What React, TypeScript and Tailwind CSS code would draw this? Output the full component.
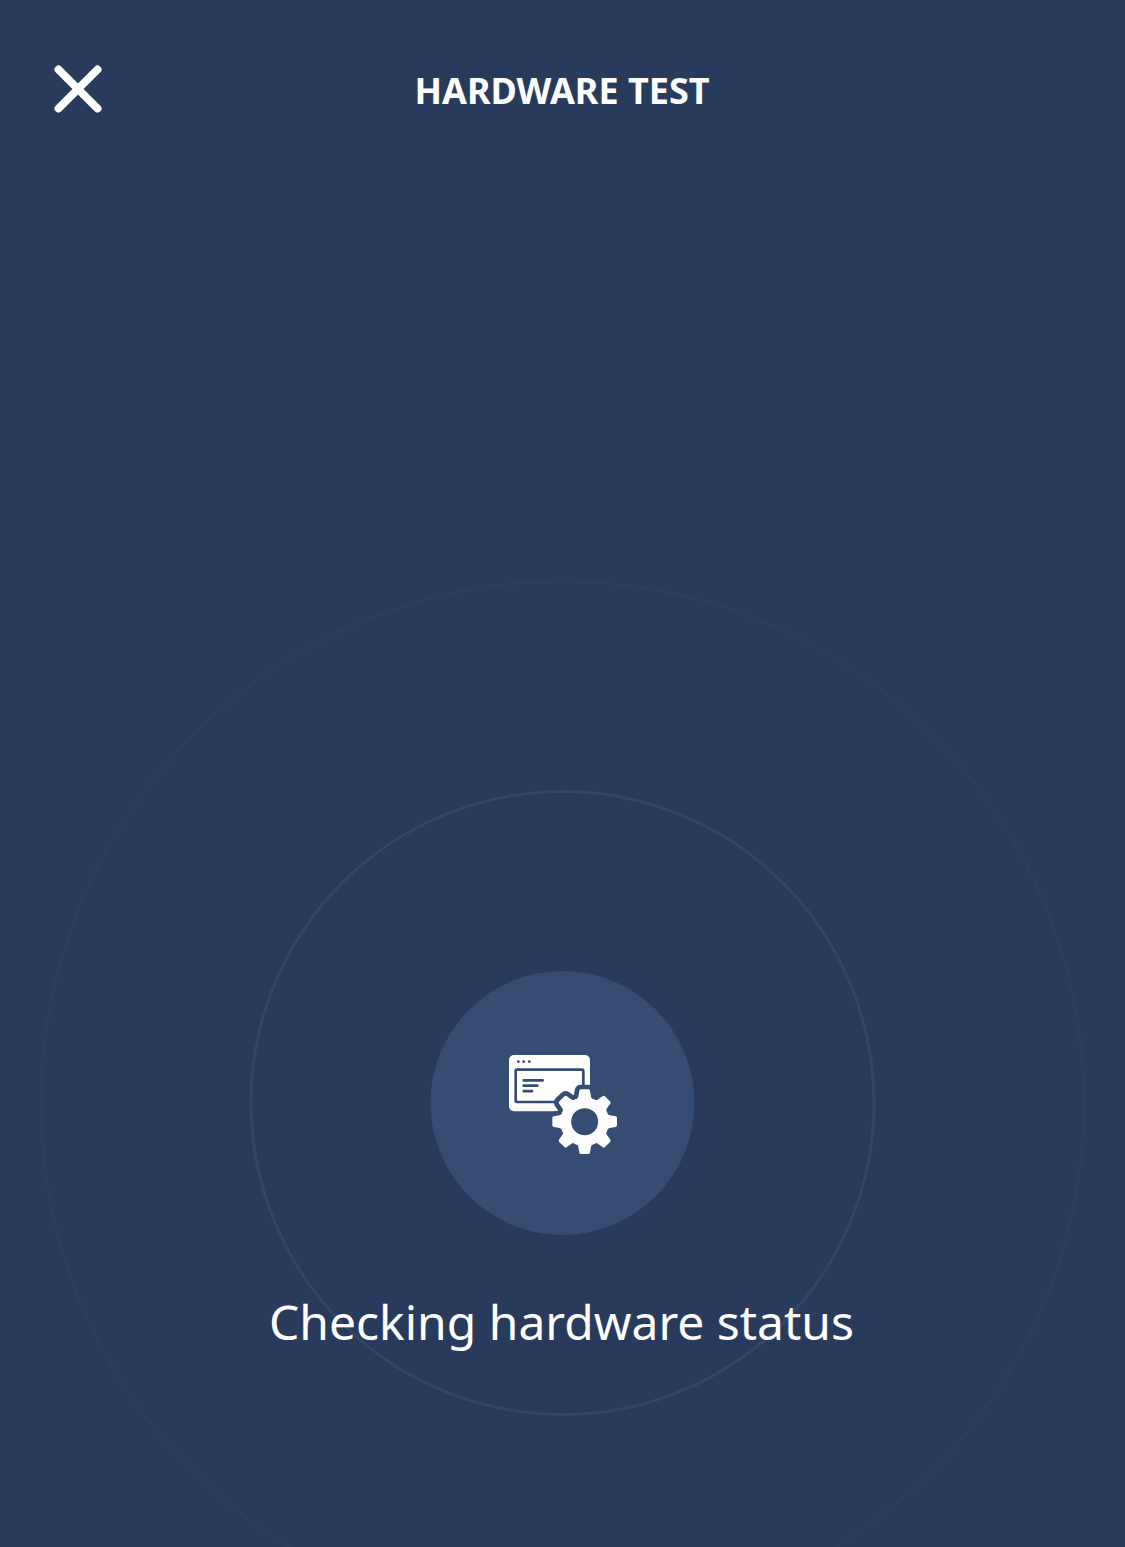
const TOOTH_ANGLES = [0, 45, 90, 135, 180, 225, 270, 315];

function Gear() {
  return (
    <>
      <circle cx="254" cy="245" r="73" />
      {TOOTH_ANGLES.map((angle) => (
        <path
          key={angle}
          transform={`rotate(${angle} 254 245)`}
          d="M225 188 L225 180 Q234 177 235 170 L238 152 Q239 148 243 148 H265 Q269 148 270 152 L273 170 Q274 177 283 180 L283 188 L254 245 Z"
        />
      ))}
    </>
  );
}

function HardwareIcon() {
  return (
    <svg viewBox="27 45 324 297" className="h-[99px] w-[108px]" aria-hidden="true">
      <rect x="27" y="45" width="243" height="169" rx="15" fill="#fff" />
      <g fill="#354c73">
        <circle cx="55" cy="65" r="4" />
        <circle cx="71" cy="65" r="4" />
        <circle cx="88" cy="65" r="4" />
      </g>
      <rect x="47" y="89" width="203" height="97" rx="3" fill="none" stroke="#354c73" strokeWidth="8" />
      <path d="M71 121H128M71 137H112M71 153.500H96" fill="none" stroke="#354c73" strokeWidth="8" strokeLinecap="round" />
      <g fill="#354c73" stroke="#354c73" strokeWidth="28" strokeLinejoin="round">
        <Gear />
      </g>
      <g fill="#fff">
        <Gear />
      </g>
      <circle cx="254" cy="245" r="40.500" fill="#354c73" />
    </svg>
  );
}

function PulseRings() {
  return (
    <svg
      viewBox="0 0 1048 1048"
      className="absolute -inset-[392px] size-[1048px] max-w-none"
      fill="none"
      strokeWidth="3"
      aria-hidden="true"
    >
      <circle cx="523.5" cy="524" r="521.5" stroke="#2c3e5e" />
      <circle cx="523.5" cy="524" r="311.5" stroke="#344664" />
      <circle cx="523.5" cy="524" r="132" fill="#354c73" stroke="none" />
    </svg>
  );
}

export default function App() {
  return (
    <main className="relative flex h-[1547px] w-full flex-col overflow-hidden bg-[#293b5c] font-['Noto_Sans',sans-serif] text-white">
      <header className="grid h-[178px] grid-cols-[156px_1fr_156px] items-center">
        <button aria-label="Close" className="ml-[53px] size-[50px]">
          <svg viewBox="0 0 50 50" className="size-[50px]" fill="none" stroke="#fff" strokeWidth="8" strokeLinecap="round">
            <path d="M5.500 5.500L44.500 44.500M44.500 5.500L5.500 44.500" />
          </svg>
        </button>
        <h1 className="pt-1 pr-px text-center text-[36px] leading-[48px] font-bold whitespace-nowrap">HARDWARE TEST</h1>
      </header>
      <section className="mt-[793px] flex flex-col items-center">
        <div className="ml-px relative flex size-[264px] items-center justify-center">
          <PulseRings />
          <div className="relative pt-[3px]">
            <HardwareIcon />
          </div>
        </div>
        <p className="relative mt-[54px] pr-[2px] text-[48px] leading-[66px] whitespace-nowrap">Checking hardware status</p>
      </section>
    </main>
  );
}
